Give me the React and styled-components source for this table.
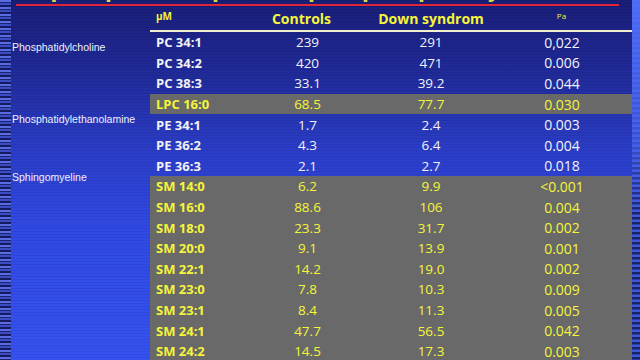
import styled, { createGlobalStyle } from "styled-components";

const GlobalStyle = createGlobalStyle`
  html, body {
    margin: 0;
    padding: 0;
    background: #1c2280;
  }
`;

const Slide = styled.div`
  width: 640px;
  height: 360px;
  display: flex;
  overflow: hidden;
`;

const LeftStripe = styled.div`
  width: 11px;
  flex-shrink: 0;
  background:
    repeating-linear-gradient(
      180deg,
      #5a6ce4 0px,
      #5a6ce4 2px,
      #1c2470 2px,
      #1c2470 3px,
      #3b4dc6 3px,
      #3b4dc6 5px,
      #151b5c 5px,
      #151b5c 7px
    );
`;

const RightStripe = styled.div`
  width: 8px;
  flex-shrink: 0;
  background:
    linear-gradient(180deg, rgba(80, 110, 250, 0.95) 0%, rgba(70, 100, 245, 0.7) 40%, rgba(0, 0, 0, 0) 60%),
    repeating-linear-gradient(
      180deg,
      #3f58d8 0px,
      #3f58d8 2px,
      #1a2268 2px,
      #1a2268 4px,
      #2c3ea8 4px,
      #2c3ea8 5px
    );
`;

const Main = styled.div`
  flex: 1;
  display: flex;
  flex-direction: column;
  background:
    repeating-linear-gradient(180deg, rgba(0, 0, 40, 0.08) 0px, rgba(0, 0, 40, 0.08) 1px, rgba(0, 0, 0, 0) 1px, rgba(0, 0, 0, 0) 3px),
    linear-gradient(180deg, #191e76 0%, #202a98 20%, #2a3cc4 40%, #3049e2 62%, #3552f0 100%);
`;

const TitleStrip = styled.div`
  height: 8px;
  display: flex;
  flex-direction: column;
`;

const TitleClip = styled.div`
  height: 4px;
  overflow: hidden;
  padding-left: 20px;
`;

const Title = styled.div`
  margin-top: -20px;
  font-family: "DejaVu Sans", sans-serif;
  font-weight: bold;
  font-size: 20px;
  line-height: 22px;
  color: #d8d84a;
  white-space: nowrap;
`;

const RedRule = styled.div`
  height: 2px;
  margin: 0 13px 0 5px;
  background: #e0243c;
`;

const Body = styled.div`
  display: flex;
  flex: 1;
`;

const Categories = styled.div`
  width: 139px;
  flex-shrink: 0;
  display: flex;
  flex-direction: column;
`;

const Category = styled.div`
  margin-top: ${(p) => p.$gap}px;
  padding-left: 1px;
  font-family: "Liberation Sans", Arial, sans-serif;
  font-size: 10.5px;
  line-height: 12px;
  color: #eef0ff;
  white-space: nowrap;
`;

const Table = styled.div`
  flex: 1;
  display: flex;
  flex-direction: column;
`;

const Row = styled.div`
  display: grid;
  grid-template-columns: 95px 125px 122px 1fr;
  align-items: center;
  height: ${(p) => (p.$head ? "24px" : "20.6px")};
  background: ${(p) => (p.$hl ? "#696969" : "transparent")};
  border-bottom: ${(p) => (p.$head ? "2px solid #f2eed0" : "none")};
  margin-right: ${(p) => (p.$head ? "-1px" : "0")};
  font-family: "Open Sans", sans-serif;
  color: ${(p) => (p.$hl || p.$head ? "#f5f53a" : "#f2f2f6")};
`;

const Name = styled.div`
  padding-left: 6px;
  font-weight: bold;
  font-size: 13px;
  white-space: nowrap;
`;

const Unit = styled.div`
  padding-left: 6px;
  padding-bottom: 4px;
  font-weight: bold;
  font-size: 10px;
`;

const Num = styled.div`
  text-align: center;
  font-size: ${(p) => (p.$p ? "14px" : "13.5px")};
  white-space: nowrap;
`;

const HeadCell = styled.div`
  text-align: center;
  font-weight: bold;
  font-size: 14px;
  white-space: nowrap;
  margin-left: ${(p) => p.$shift || 0}px;
`;

const PHead = styled.div`
  text-align: center;
  font-size: 8px;
  padding-bottom: 6px;
  margin-right: 2px;
`;

const rows = [
  ["PC 34:1", "239", "291", "0,022"],
  ["PC 34:2", "420", "471", "0.006"],
  ["PC 38:3", "33.1", "39.2", "0.044"],
  ["LPC 16:0", "68.5", "77.7", "0.030", true],
  ["PE 34:1", "1.7", "2.4", "0.003"],
  ["PE 36:2", "4.3", "6.4", "0.004"],
  ["PE 36:3", "2.1", "2.7", "0.018"],
  ["SM 14:0", "6.2", "9.9", "<0.001", true],
  ["SM 16:0", "88.6", "106", "0.004", true],
  ["SM 18:0", "23.3", "31.7", "0.002", true],
  ["SM 20:0", "9.1", "13.9", "0.001", true],
  ["SM 22:1", "14.2", "19.0", "0.002", true],
  ["SM 23:0", "7.8", "10.3", "0.009", true],
  ["SM 23:1", "8.4", "11.3", "0.005", true],
  ["SM 24:1", "47.7", "56.5", "0.042", true],
  ["SM 24:2", "14.5", "17.3", "0.003", true],
];

export default function App() {
  return (
    <>
      <GlobalStyle />
      <Slide>
        <LeftStripe />
        <Main>
          <TitleStrip>
            <TitleClip>
              <Title>Lipid species in plasma: phospholipids by MS</Title>
            </TitleClip>
            <RedRule />
          </TitleStrip>
          <Body>
            <Categories>
              <Category $gap={35}>Phosphatidylcholine</Category>
              <Category $gap={60}>Phosphatidylethanolamine</Category>
              <Category $gap={46}>Sphingomyeline</Category>
            </Categories>
            <Table>
              <Row $head>
                <Unit>µM</Unit>
                <HeadCell $shift={-12}>Controls</HeadCell>
                <HeadCell>Down syndrom</HeadCell>
                <PHead>Pa</PHead>
              </Row>
              {rows.map(([name, ctl, ds, p, hl]) => (
                <Row key={name} $hl={hl}>
                  <Name>{name}</Name>
                  <Num>{ctl}</Num>
                  <Num>{ds}</Num>
                  <Num $p>{p}</Num>
                </Row>
              ))}
            </Table>
          </Body>
        </Main>
        <RightStripe />
      </Slide>
    </>
  );
}
